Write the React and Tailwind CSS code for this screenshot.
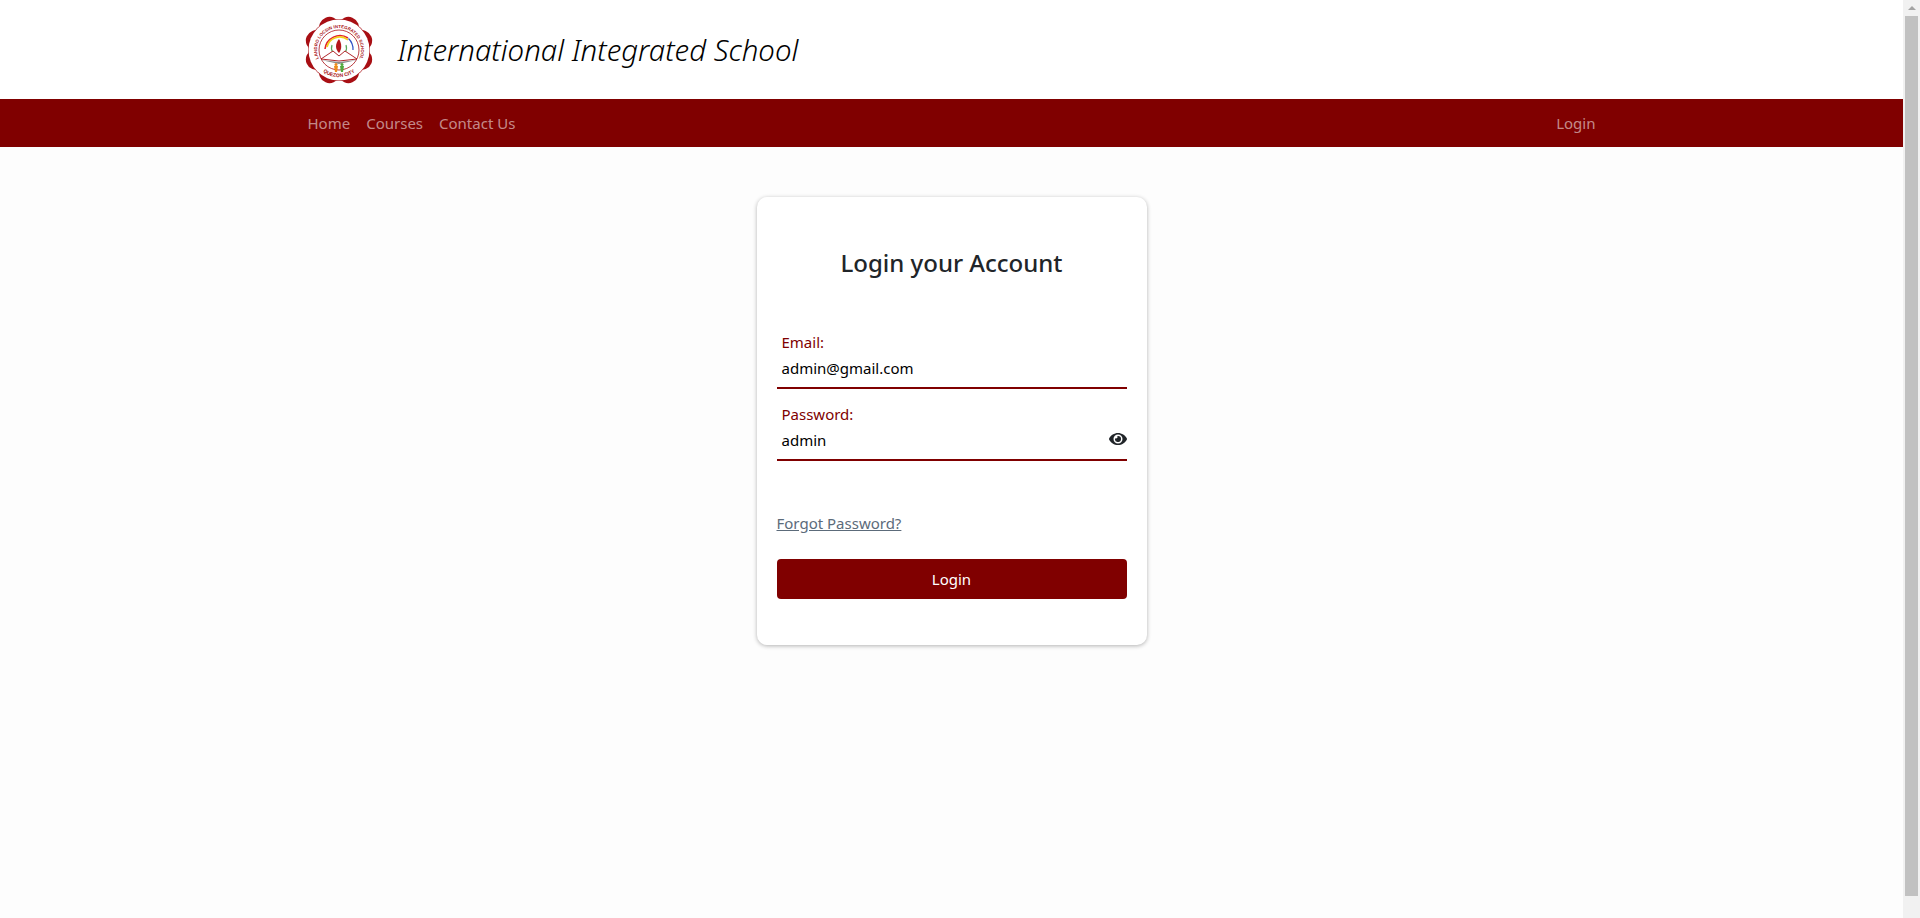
import { FaEye } from "react-icons/fa";

function Logo() {
  const lobes = Array.from({ length: 8 }, (_, i) => (i * 360) / 8 + 22.5);
  return (
    <svg width="70" height="72" viewBox="0 0 70 72" className="shrink-0">
      <defs>
        <path id="ringTop" d="M15.950 47 A22 22 0 1 1 54.050 47" />
        <path id="ringBottom" d="M14.300 53.400 A27 27 0 0 0 55.700 53.400" />
      </defs>
      {lobes.map((a) => (
        <circle
          key={a}
          cx="35"
          cy="11.500"
          r="10.500"
          fill="#a80f14"
          transform={`rotate(${a} 35 36)`}
        />
      ))}
      <circle cx="35" cy="36" r="31" fill="#a80f14" />
      <circle cx="35" cy="36" r="30.500" fill="#fff" />
      <circle cx="35" cy="36" r="20" fill="none" stroke="#a80f14" strokeWidth="0.8" />
      <text fontSize="4.400" fill="#a80f14" fontFamily="Liberation Sans, sans-serif" fontWeight="700" textAnchor="middle">
        <textPath href="#ringTop" startOffset="50%">
          LANDRO LOCSIN INTEGRATED SCHOOL
        </textPath>
      </text>
      <text fontSize="5" fill="#a80f14" fontFamily="Liberation Sans, sans-serif" fontWeight="700" textAnchor="middle">
        <textPath href="#ringBottom" startOffset="50%">
          QUEZON CITY
        </textPath>
      </text>
      <path d="M21 35 A15 15 0 0 1 44 24" fill="none" stroke="#e3262b" strokeWidth="1.600" />
      <path d="M23 33 A13 13 0 0 1 44 26" fill="none" stroke="#f2d21b" strokeWidth="1.600" />
      <path d="M44.500 24.500 A15 15 0 0 1 49 36" fill="none" stroke="#2d4fc4" strokeWidth="1.200" />
      <path d="M28 31 C26 37 30 41 34 42 M42 31 C44 37 40 41 36 42" fill="none" stroke="#57a85a" strokeWidth="1.200" />
      <path d="M35 25 C31 30 31 35 35 39 C38 35 38 30 35 25Z" fill="#b5161b" />
      <path d="M17 45 L29 37 L35 42 L41 37 L53 45 L35 47Z" fill="#fff" stroke="#a80f14" strokeWidth="0.900" />
      <path d="M17 46 L35 48 L53 46 L35 50Z" fill="#8c8c8c" />
      <circle cx="32" cy="50.500" r="1.500" fill="#ef8c1a" />
      <path d="M30 52 h4 l-1 6 h-2Z" fill="#ef8c1a" />
      <circle cx="38" cy="50.500" r="1.500" fill="#53a83c" />
      <path d="M36 52 h4 l-1 6 h-2Z" fill="#53a83c" />
    </svg>
  );
}

function Field({ label, value, children }) {
  return (
    <div className="relative border-b-2 border-[#800000] h-[59px] pl-[5px] pt-[1px]">
      <div className="text-[#800000] text-[15px] leading-[22px]">{label}</div>
      <div className="text-black text-[15px] leading-[22px] mt-[4px]">{value}</div>
      {children}
    </div>
  );
}

export default function App() {
  return (
    <div
      className="flex h-[918px] overflow-hidden bg-[#fdfdfd]"
      style={{ fontFamily: '"Noto Sans", "Open Sans", sans-serif' }}
    >
      <div className="flex-1 flex flex-col min-w-0">
        <header className="h-[99px] bg-white">
          <div className="w-[1320px] mx-auto flex items-center h-full pl-[12px]">
            <Logo />
            <h1 className="ml-[24px] pt-[2px] text-[29.400px] italic font-light text-black">International Integrated School</h1>
          </div>
        </header>
        <nav className="h-[48px] bg-[#800000]">
          <div className="w-[1320px] mx-auto h-full flex items-center justify-between px-[16px] text-[15px] text-[#ffffff8c]">
            <div className="flex gap-[16px]">
              <a>Home</a>
              <a>Courses</a>
              <a>Contact Us</a>
            </div>
            <a>Login</a>
          </div>
        </nav>
        <main className="flex-1 pt-[50px]">
          <div className="w-[390px] h-[448px] mx-auto bg-white rounded-[10px] shadow-[0_1px_4px_rgba(0,0,0,0.3)] px-[20px] pt-[50px]">
            <h2 className="text-center text-[24px] leading-[32px] font-medium text-[#212529]">Login your Account</h2>
            <div className="mt-[51px] flex flex-col gap-[13px]">
              <Field label="Email:" value="admin@gmail.com" />
              <Field label="Password:" value="admin">
                <FaEye className="absolute right-0 top-[28px] text-[#212529]" size={18} />
              </Field>
            </div>
            <a className="block mt-[50px] text-[15px] leading-[24px] underline text-[#5c6b7a]">Forgot Password?</a>
            <button className="mt-[24px] w-full h-[40px] rounded-[4px] bg-[#800000] text-white text-[15px]">
              Login
            </button>
          </div>
        </main>
      </div>
      <div className="w-[17px] shrink-0 bg-[#f1f1f1] flex flex-col items-center">
        <div className="h-[16px] flex items-center justify-center">
          <div className="w-0 h-0 border-l-[4px] border-r-[4px] border-b-[4px] border-l-transparent border-r-transparent border-b-[#a3a3a3]" />
        </div>
        <div className="w-[13px] h-[880px] bg-[#c1c1c1]" />
      </div>
    </div>
  );
}
